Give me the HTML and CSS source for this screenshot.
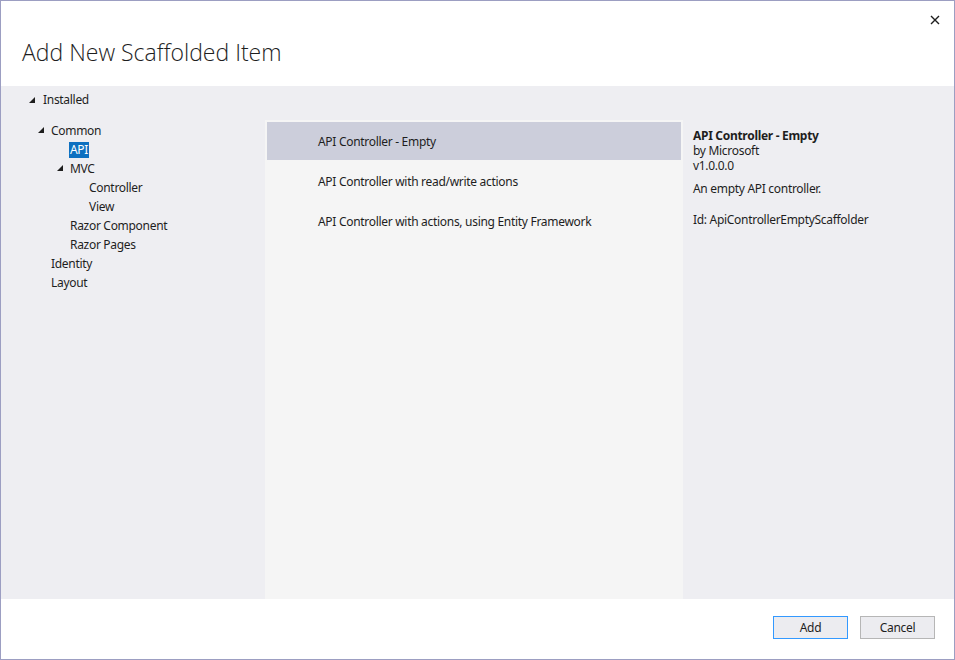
FILE: index.html
```html
<!DOCTYPE html>
<html lang="en">
<head>
  <meta charset="UTF-8" />
  <title>Add New Scaffolded Item</title>
  <link rel="stylesheet" href="styles.css">
</head>
<body>
  <div class="dialog">
    <div class="header">
      <h1>Add New Scaffolded Item</h1>
      <span class="close">
        <svg width="10" height="10" viewBox="0 0 10 10"><path d="M1 1 L9 9 M9 1 L1 9" stroke="#1e1e1e" stroke-width="1.4"/></svg>
      </span>
    </div>

    <div class="main">
      <div class="installed">
        <svg class="tri" width="6" height="6" viewBox="0 0 6 6"><polygon points="0,6 6,6 6,0" fill="#1e1e1e"/></svg>
        <span>Installed</span>
      </div>
      <div class="columns">
        <ul class="tree">
          <li class="lvl1"><svg class="tri" width="6" height="6" viewBox="0 0 6 6"><polygon points="0,6 6,6 6,0" fill="#1e1e1e"/></svg>Common</li>
          <li class="lvl2"><span class="picked">API</span></li>
          <li class="lvl2 has-tri"><svg class="tri" width="6" height="6" viewBox="0 0 6 6"><polygon points="0,6 6,6 6,0" fill="#1e1e1e"/></svg>MVC</li>
          <li class="lvl3">Controller</li>
          <li class="lvl3">View</li>
          <li class="lvl2">Razor Component</li>
          <li class="lvl2">Razor Pages</li>
          <li class="lvl1">Identity</li>
          <li class="lvl1">Layout</li>
        </ul>

        <div class="list">
          <div class="row selected">API Controller - Empty</div>
          <div class="row">API Controller with read/write actions</div>
          <div class="row">API Controller with actions, using Entity Framework</div>
        </div>

        <div class="details">
          <div class="d-line d-title">API Controller - Empty</div>
          <div class="d-line">by Microsoft</div>
          <div class="d-line">v1.0.0.0</div>
          <div class="d-line d-desc">An empty API controller.</div>
          <div class="d-line d-id">Id: ApiControllerEmptyScaffolder</div>
        </div>
      </div>
    </div>

    <div class="footer">
      <button class="btn primary">Add</button>
      <button class="btn">Cancel</button>
    </div>
  </div>
</body>
</html>
```

FILE: styles.css
```css
* {
  box-sizing: border-box;
}
body {
  margin: 0;
  font-family: "Segoe UI", "Noto Sans", "Open Sans", sans-serif;
  font-size: 12px;
  letter-spacing: -0.3px;
  color: #1e1e1e;
  background: #ffffff;
}
.dialog {
  width: 955px;
  height: 660px;
  border: 1px solid #9c9ec2;
  display: flex;
  flex-direction: column;
  background: #ffffff;
}
.header {
  height: 85px;
  position: relative;
  flex: none;
}
.header h1 {
  margin: 0;
  padding: 35px 0 0 21px;
  font-family: "Segoe UI Light", "Open Sans", sans-serif;
  font-weight: 300;
  font-size: 23px;
  letter-spacing: 0;
  line-height: 32px;
  color: #1e1e1e;
}
.close {
  position: absolute;
  top: 14px;
  right: 14px;
  line-height: 0;
}
.main {
  background: #eeeef2;
  flex: 1;
  display: flex;
  flex-direction: column;
}
.installed {
  height: 34px;
  padding: 0 0 0 28px;
  line-height: 28px;
  display: flex;
  align-items: flex-start;
  align-self: flex-start;
}
.installed .tri {
  margin-right: 8px;
  margin-top: 11px;
}
.columns {
  flex: 1;
  display: flex;
}
.tree {
  list-style: none;
  margin: 0;
  padding: 1px 0 0 0;
  width: 264px;
}
.tree li {
  height: 19px;
  line-height: 19px;
  display: flex;
  align-items: center;
  white-space: nowrap;
}
.tree .tri {
  margin-right: 7px;
  margin-top: -1px;
}
.lvl1 {
  padding-left: 50px;
}
.lvl1:first-child {
  padding-left: 37px;
}
.lvl2 {
  padding-left: 69px;
}
.lvl2.has-tri {
  padding-left: 56px;
}
.lvl3 {
  padding-left: 88px;
}
.picked {
  background: #0e70c0;
  color: #ffffff;
  padding: 0 1px;
  margin-left: -1px;
  line-height: 16px;
}
.list {
  width: 418px;
  background: #f5f5f5;
  padding: 2px;
}
.row {
  height: 38px;
  line-height: 40px;
  padding-left: 51px;
  margin-bottom: 2px;
  white-space: nowrap;
}
.row.selected {
  background: #cccedb;
}
.details {
  flex: 1;
  padding: 8px 0 0 10px;
}
.d-line {
  height: 15px;
  line-height: 15px;
}
.d-title {
  font-weight: bold;
}
.d-desc {
  margin-top: 8px;
}
.d-id {
  margin-top: 16px;
}
.footer {
  height: 60px;
  flex: none;
  display: flex;
  justify-content: flex-end;
  align-items: flex-start;
  padding: 17px 19px 0 0;
  gap: 12px;
}
.btn {
  width: 75px;
  height: 23px;
  font-family: inherit;
  font-size: 12px;
  letter-spacing: -0.3px;
  color: #1e1e1e;
  background: #ececf0;
  border: 1px solid #b6b6b6;
  padding: 0;
}
.btn.primary {
  border-color: #3399ff;
}
```
